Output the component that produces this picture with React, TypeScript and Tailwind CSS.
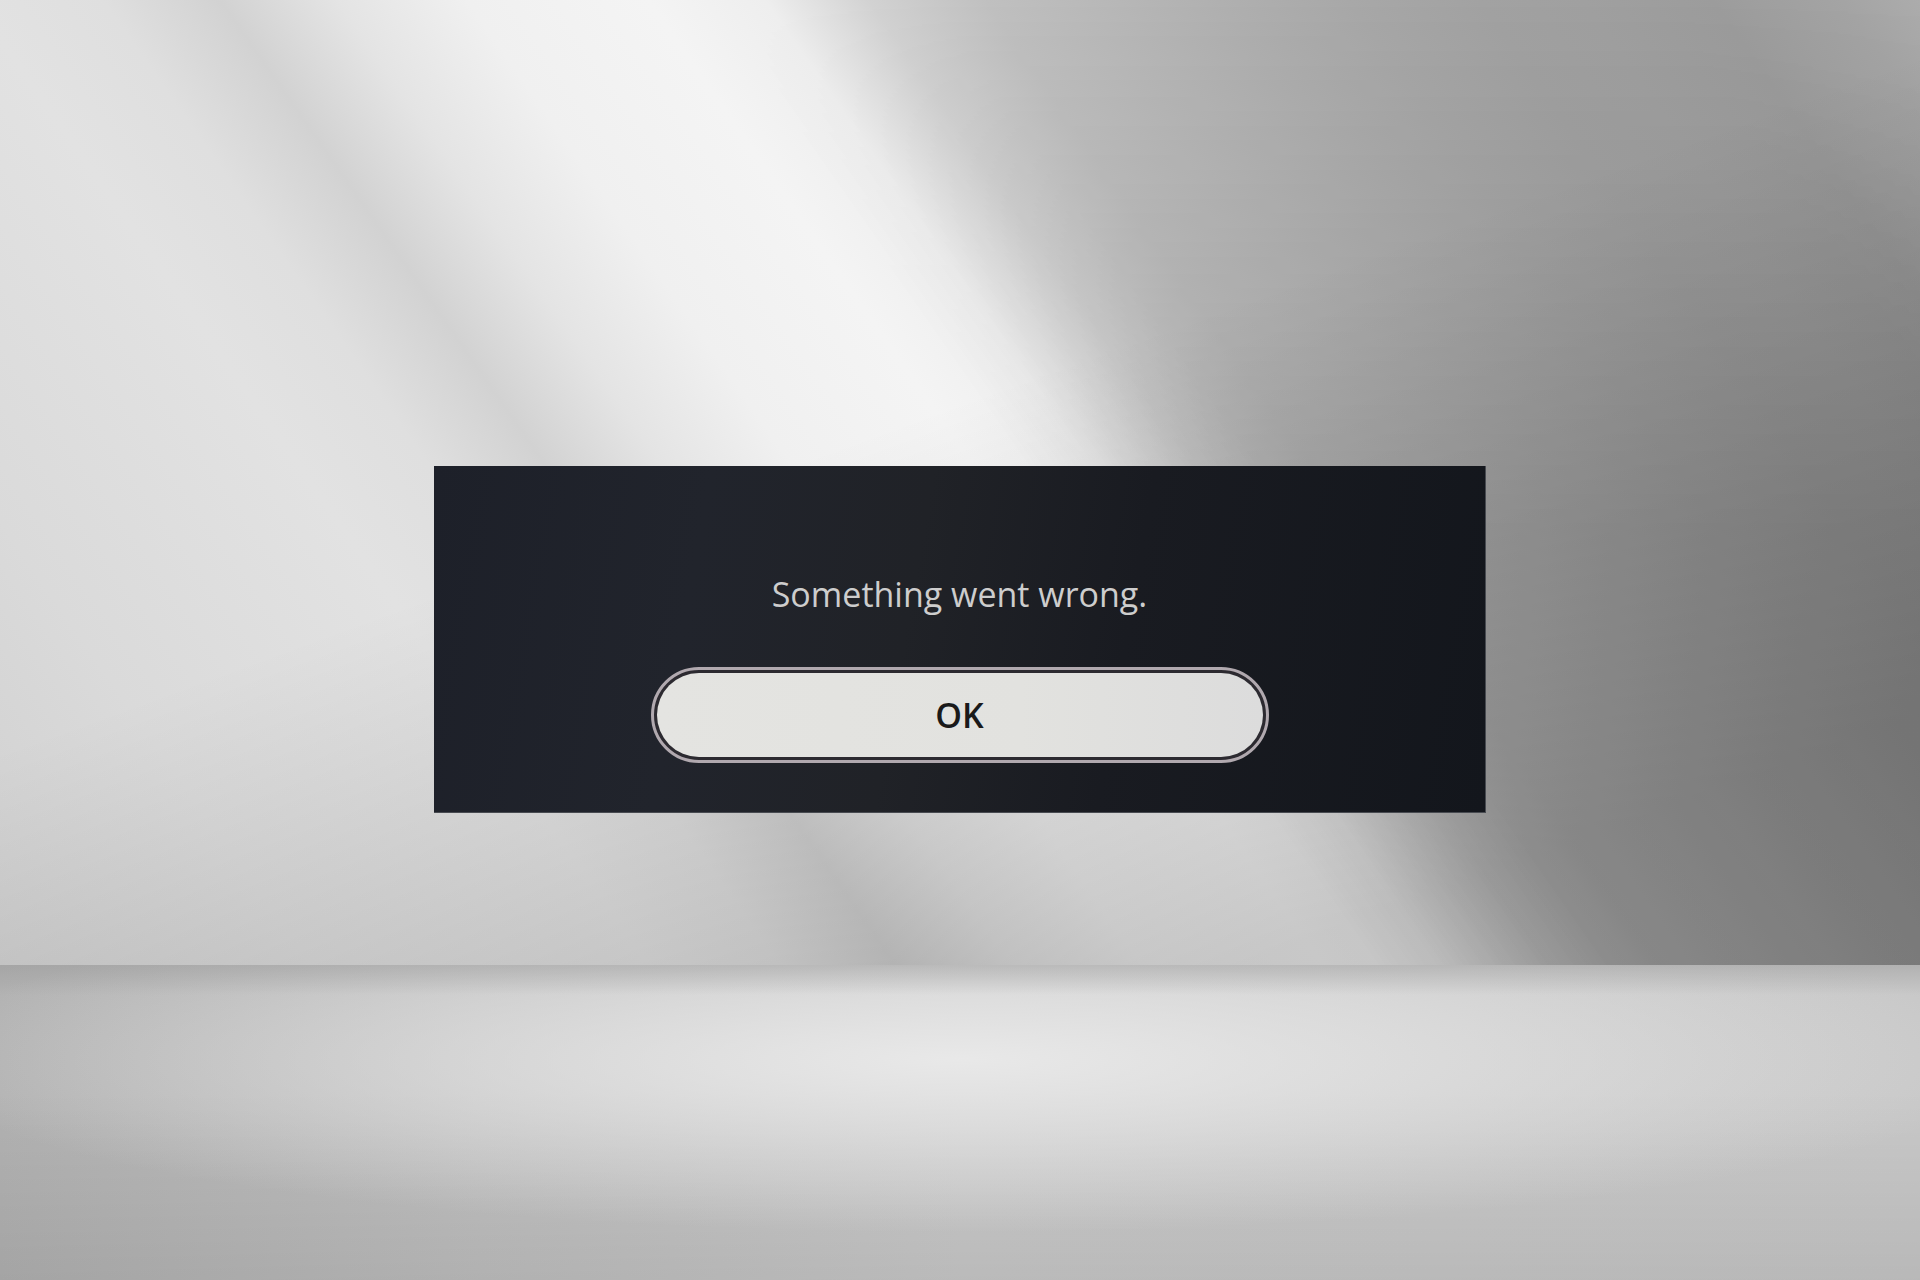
export default function App() {
  return (
    <div className="flex h-[1280px] w-[1920px] flex-col overflow-hidden bg-[#c4c4c4] font-['Open_Sans','Noto_Sans',sans-serif]">
      {/* back wall with diagonal light streaks */}
      <div className="relative flex h-[965px] w-full justify-center pt-[466px] bg-[image:linear-gradient(160deg,rgba(0,0,0,0)_45%,rgba(0,0,0,0.18)_85%),linear-gradient(55deg,#cfcfcf_0%,#dadada_12%,#e2e2e2_25%,#dfdfdf_30%,#d2d2d2_34.5%,#e4e4e4_39%,#f0f0f0_44%,#f4f4f4_51%,#eeeeee_55.5%,#d2d2d2_59.5%,#c0c0c0_64%,#b8b8b8_68.5%,#b0b0b0_73%,#a8a8a8_78%,#a2a2a2_83%,#a0a0a0_87%,#9c9c9c_92%,#a4a4a4_97%,#acacac_100%)]">
        {/* shadow deepening toward the lower right of the wall */}
        <div className="pointer-events-none absolute inset-0 bg-[image:linear-gradient(55deg,rgba(0,0,0,0)_53%,rgba(0,0,0,0.14)_62%,rgba(0,0,0,0.14)_90%,rgba(0,0,0,0.06)_100%)] [mask-image:linear-gradient(to_bottom,transparent,black_55%)]" />

        {/* error dialog */}
        <div className="relative z-10 flex h-[347px] w-[1052px] flex-col items-center border-r border-b border-[#484b51] pt-[105px] bg-[image:linear-gradient(100deg,#1d2029_0%,#21242c_25%,#202227_45%,#191b21_65%,#13161c_100%)]">
          <p className="text-[34px] leading-[46px] font-normal text-[#cdcdcd]">
            Something went wrong.
          </p>
          <button className="mt-[50px] flex h-[96px] w-[618px] rounded-full border-[3px] border-[#b1a9af] bg-[#2c2a30] p-[3px]">
            <span className="flex h-full w-full items-center justify-center rounded-full bg-[image:linear-gradient(to_right,#e4e4e1,#e2e2df_60%,#dcdcdc)] text-[34px] leading-none font-semibold text-[#1a1a1a]">
              OK
            </span>
          </button>
        </div>
      </div>

      {/* floor */}
      <div className="w-full flex-1 bg-[image:linear-gradient(to_bottom,rgba(150,150,150,0.45),rgba(150,150,150,0)_30px),radial-gradient(ellipse_55%_55%_at_50%_30%,rgba(234,234,234,0.95),rgba(234,234,234,0)),linear-gradient(to_bottom,rgba(0,0,0,0)_40%,rgba(0,0,0,0.08)_100%),linear-gradient(to_right,#b2b2b2_0%,#c0c0c0_25%,#cacaca_50%,#c8c8c8_100%)]" />
    </div>
  );
}
